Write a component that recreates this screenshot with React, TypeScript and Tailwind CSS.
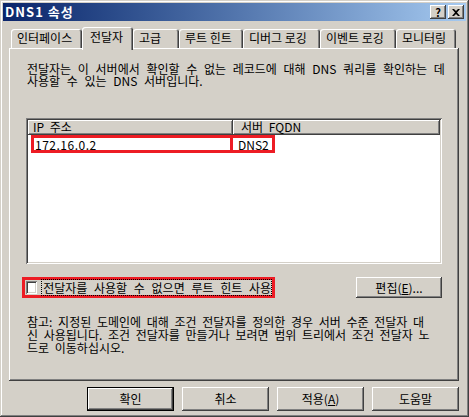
import React from 'react';

const raised =
  'shadow-[inset_-1px_-1px_#404040,inset_1px_1px_#ffffff,inset_-2px_-2px_#808080,inset_2px_2px_#d4d0c8]';

function Tab({ label, width, active }: { label: string; width: number; active?: boolean }) {
  return (
    <div
      style={{ width }}
      className={
        active
          ? 'relative z-10 mb-[-2px] h-[23px] rounded-t-[3px] bg-[#d4d0c8] pl-[8px] pt-[4px] shadow-[inset_1px_1px_#ffffff,inset_-1px_0_#404040,inset_-2px_0_#808080]'
          : 'h-[19px] rounded-t-[3px] bg-[#d4d0c8] pl-[6px] pt-[3px] shadow-[inset_1px_1px_#ffffff,inset_-1px_0_#404040,inset_-2px_0_#808080]'
      }
    >
      {label}
    </div>
  );
}

function Button({ children, primary }: { children: React.ReactNode; primary?: boolean }) {
  return (
    <div
      className={
        primary
          ? 'flex h-[24px] w-[87px] items-center justify-center border border-black bg-[#d4d0c8] ' + raised
          : 'flex h-[24px] w-[87px] items-center justify-center bg-[#d4d0c8] ' + raised
      }
    >
      {children}
    </div>
  );
}

export default function App() {
  return (
    <div className="h-[417px] w-[469px] bg-[#d4d0c8] p-[3px] font-['Noto_Sans_CJK_KR',sans-serif] text-[12px] leading-[12px] text-black shadow-[inset_-1px_-1px_#404040,inset_1px_1px_#d4d0c8,inset_-2px_-2px_#808080,inset_2px_2px_#ffffff]">
      {/* title bar */}
      <div className="flex h-[18px] items-center justify-between bg-gradient-to-r from-[#0a246a] to-[#a6caf0] pl-[2px] pr-[2px]">
        <span className="text-[13px] font-bold tracking-[1px] text-white">DNS1 속성</span>
        <div className="flex">
          <div className={'flex h-[14px] w-[16px] items-center justify-center bg-[#d4d0c8] text-[11px] font-bold ' + raised}>?</div>
          <div className={'ml-[2px] flex h-[14px] w-[16px] items-center justify-center bg-[#d4d0c8] ' + raised}>
            <svg width="8" height="7" viewBox="0 0 8 7">
              <path d="M0 0h2l2 2 2-2h2L5 3.5 8 7H6L4 5 2 7H0l3-3.5z" fill="black" />
            </svg>
          </div>
        </div>
      </div>

      {/* tabs */}
      <div className="ml-[6px] mt-[6px] flex h-[21px] items-end">
        <div className="w-[2px]" />
        <Tab label="인터페이스" width={71} />
        <Tab label="전달자" width={51} active />
        <Tab label="고급" width={46} />
        <Tab label="루트 힌트" width={64} />
        <Tab label="디버그 로깅" width={77} />
        <Tab label="이벤트 로깅" width={76} />
        <Tab label="모니터링" width={60} />
      </div>

      {/* panel */}
      <div className="ml-[6px] flex h-[333px] w-[450px] flex-col pl-[18px] pt-[15px] shadow-[inset_-1px_-1px_#404040,inset_1px_1px_#ffffff,inset_-2px_-2px_#808080]">
        <p className="whitespace-nowrap [word-spacing:4px]">
          전달자는 이 서버에서 확인할 수 없는 레코드에 대해 DNS 쿼리를 확인하는 데
          <br />
          사용할 수 있는 DNS 서버입니다.
        </p>

        {/* list */}
        <div className="ml-[-1px] mt-[31px] h-[146px] w-[416px] bg-white p-[2px] shadow-[inset_1px_1px_#808080,inset_-1px_-1px_#ffffff,inset_2px_2px_#404040,inset_-2px_-2px_#d4d0c8]">
          <div className="flex h-[15px] [word-spacing:3px]">
            <div className={'w-[205px] bg-[#d4d0c8] pl-[5px] pt-[1px] ' + raised}>IP 주소</div>
            <div className={'flex-1 bg-[#d4d0c8] pl-[8px] pt-[1px] ' + raised}>서버 FQDN</div>
          </div>
          <div className="ml-[3px] flex h-[18px]">
            <div className="w-[202px] border-[3px] border-[#ed1c24] pl-[1px] pt-[1px] tracking-[0.5px]">172.16.0.2</div>
            <div className="w-[42px] border-y-[3px] border-r-[3px] border-[#ed1c24] pl-[5px] pt-[1px]">DNS2</div>
          </div>
        </div>

        {/* checkbox row */}
        <div className="ml-[-5px] mt-[13px] flex items-center justify-between pr-[17px]">
          <div className="flex h-[21px] w-[253px] items-center border-[3px] border-[#ed1c24] pl-[1px]">
            <div className="h-[13px] w-[13px] bg-white shadow-[inset_1px_1px_#808080,inset_-1px_-1px_#ffffff,inset_2px_2px_#404040,inset_-2px_-2px_#d4d0c8]" />
            <div className="ml-[4px] flex h-[17px] flex-1 items-center whitespace-nowrap border border-dotted border-black pl-[1px] [word-spacing:4px]">
              전달자를 사용할 수 없으면 루트 힌트 사용
            </div>
          </div>
          <div className={'flex h-[21px] w-[86px] items-center justify-center bg-[#d4d0c8] ' + raised}>
            편집(<span className="underline">E</span>)...
          </div>
        </div>

        <p className="mt-[17px] whitespace-nowrap leading-[13px] [word-spacing:3px]">
          참고: 지정된 도메인에 대해 조건 전달자를 정의한 경우 서버 수준 전달자 대
          <br />
          신 사용됩니다. 조건 전달자를 만들거나 보려면 범위 트리에서 조건 전달자 노
          <br />
          드로 이동하십시오.
        </p>
      </div>

      {/* buttons */}
      <div className="mt-[6px] flex justify-end gap-[8px] pr-[7px]">
        <Button primary>확인</Button>
        <Button>취소</Button>
        <Button>
          적용(<span className="underline">A</span>)
        </Button>
        <Button>도움말</Button>
      </div>
    </div>
  );
}
